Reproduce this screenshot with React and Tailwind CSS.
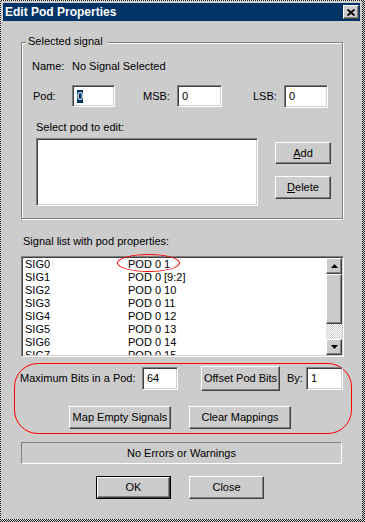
import React from "react";

const FONT = "font-['Liberation_Sans',Arial,sans-serif]";

function Raised({ className = "", children }) {
  return (
    <div
      className={`flex items-center justify-center bg-[#cccccc] border border-t-white border-l-white border-r-[#404040] border-b-[#404040] shadow-[inset_-1px_-1px_0_#808080] text-black ${className}`}
    >
      {children}
    </div>
  );
}

function Input({ className = "", children }) {
  return (
    <div
      className={`flex items-center bg-white border border-t-[#808080] border-l-[#808080] border-b-white border-r-white shadow-[inset_1px_1px_0_#404040,inset_-1px_-1px_0_#d4d0c8] pl-[4px] ${className}`}
    >
      {children}
    </div>
  );
}

function Tri({ down }) {
  return (
    <svg width="7" height="4" viewBox="0 0 7 4">
      {down ? (
        <polygon points="0,0 7,0 3.5,4" fill="#000" />
      ) : (
        <polygon points="0,4 7,4 3.5,0" fill="#000" />
      )}
    </svg>
  );
}

const rows = [
  ["SIG0", "POD 0 1"],
  ["SIG1", "POD 0 [9:2]"],
  ["SIG2", "POD 0 10"],
  ["SIG3", "POD 0 11"],
  ["SIG4", "POD 0 12"],
  ["SIG5", "POD 0 13"],
  ["SIG6", "POD 0 14"],
  ["SIG7", "POD 0 15"],
];

export default function App() {
  return (
    <div
      className={`${FONT} w-[365px] h-[522px] pt-[1px] pl-[1px] pr-[3px] pb-[3px] bg-[repeating-conic-gradient(#1a1a1a_0%_25%,#e0e0e0_0%_50%)] bg-[length:2px_2px] text-[11px] leading-[13px] text-black`}
    >
      <div className="w-[361px] h-[518px] bg-[#cccccc] p-[2px] flex flex-col">
        {/* Title bar */}
        <div className="h-[18px] bg-[#003366] flex items-center justify-between">
          <span className="pl-[2px] text-white font-bold text-[12px]">Edit Pod Properties</span>
          <Raised className="w-[16px] h-[14px] mr-[1px]">
            <svg width="8" height="7" viewBox="0 0 8 7">
              <path d="M0.5 0.5 L7.5 6.5 M7.5 0.5 L0.5 6.5" stroke="#000" strokeWidth="1.8" />
            </svg>
          </Raised>
        </div>

        {/* Selected signal group */}
        <div className="relative mt-[21px] ml-[18px] w-[322px] h-[177px] border border-[#808080] shadow-[inset_1px_1px_0_#fff,1px_1px_0_#fff] flex flex-col">
          <span className="absolute top-[-8px] left-[4px] pl-[2px] pr-[5px] bg-[#cccccc]">Selected signal</span>

          <div className="mt-[17px] ml-[10px] flex h-[13px]">
            <span className="w-[40px]">Name:</span>
            <span>No Signal Selected</span>
          </div>

          <div className="mt-[12px] ml-[11px] flex items-center h-[22px]">
            <span className="w-[39px]">Pod:</span>
            <Input className="w-[43px] h-[22px]">
              <span className="bg-[#003366] text-white leading-[13px]">0</span>
            </Input>
            <span className="ml-[28px] w-[34px]">MSB:</span>
            <Input className="w-[45px] h-[22px]">0</Input>
            <span className="ml-[31px] w-[31px]">LSB:</span>
            <Input className="w-[44px] h-[23px]">0</Input>
          </div>

          <div className="mt-[14px] ml-[14px] h-[13px]">Select pod to edit:</div>

          <div className="mt-[4px] ml-[14px] flex">
            <Input className="w-[222px] h-[68px]" />
            <div className="ml-[17px] flex flex-col">
              <Raised className="mt-[4px] w-[56px] h-[22px]">
                <span>
                  <span className="underline">A</span>dd
                </span>
              </Raised>
              <Raised className="mt-[12px] w-[56px] h-[23px]">
                <span>
                  <span className="underline">D</span>elete
                </span>
              </Raised>
            </div>
          </div>
        </div>

        {/* Signal list */}
        <div className="mt-[16px] ml-[20px] h-[13px]">Signal list with pod properties:</div>

        <div className="relative mt-[8px] ml-[18px] w-[323px] h-[101px]">
          <div className="w-full h-full flex bg-white border border-t-[#808080] border-l-[#808080] border-b-white border-r-white shadow-[inset_1px_1px_0_#404040,inset_-1px_-1px_0_#d4d0c8] p-[1px]">
            <div className="flex-1 overflow-hidden pl-[2px]">
              {rows.map(([s, p]) => (
                <div key={s} className="flex h-[13px]">
                  <span className="w-[103px]">{s}</span>
                  <span>{p}</span>
                </div>
              ))}
            </div>
            <div className="w-[16px] h-full flex flex-col">
              <Raised className="w-[16px] h-[16px]">
                <Tri />
              </Raised>
              <Raised className="w-[16px] h-[50px]" />
              <div className="flex-1 bg-[repeating-conic-gradient(#cccccc_0%_25%,#ffffff_0%_50%)] bg-[length:2px_2px]" />
              <Raised className="w-[16px] h-[16px]">
                <Tri down />
              </Raised>
            </div>
          </div>
          <div className="absolute left-[96px] top-[-2px] w-[63px] h-[18px] rounded-[50%] border border-[#ff0000] pointer-events-none" />
        </div>

        {/* Red annotated area */}
        <div className="mt-[6px] ml-[11px] w-[338px] h-[71px] rounded-[24px] border border-[#ff0000] flex flex-col">
          <div className="mt-[2px] flex items-center h-[25px]">
            <span className="ml-[5px] w-[122px]">Maximum Bits in a Pod:</span>
            <Input className="w-[36px] h-[23px]">64</Input>
            <Raised className="ml-[23px] w-[79px] h-[25px]">Offset Pod Bits</Raised>
            <span className="ml-[7px] w-[19px]">By:</span>
            <Input className="w-[37px] h-[23px]">1</Input>
          </div>
          <div className="mt-[15px] flex">
            <Raised className="ml-[54px] w-[102px] h-[23px]">Map Empty Signals</Raised>
            <Raised className="ml-[18px] w-[102px] h-[23px]">Clear Mappings</Raised>
          </div>
        </div>

        {/* Status */}
        <div className="mt-[8px] ml-[18px] w-[321px] h-[22px] flex items-center justify-center border border-t-[#808080] border-l-[#808080] border-b-white border-r-white">
          No Errors or Warnings
        </div>

        {/* OK / Close */}
        <div className="mt-[12px] flex">
          <div className="ml-[93px] w-[75px] h-[23px] border border-black">
            <Raised className="w-full h-full">OK</Raised>
          </div>
          <Raised className="ml-[18px] w-[75px] h-[23px]">Close</Raised>
        </div>
      </div>
    </div>
  );
}
